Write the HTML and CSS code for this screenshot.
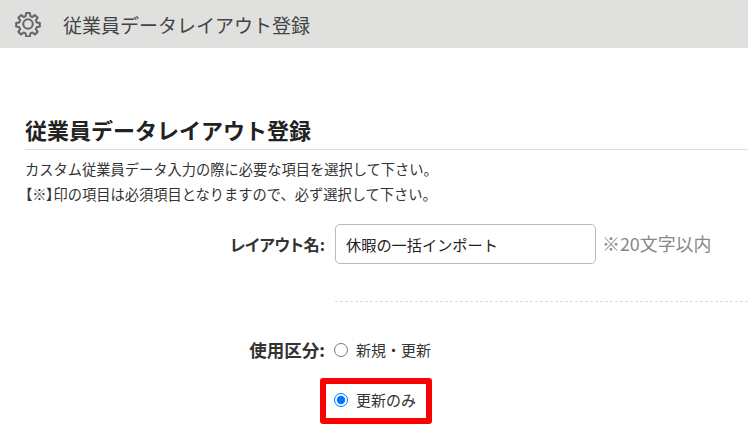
FILE: index.html
```html
<!DOCTYPE html>
<html lang="ja">
<head>
    <meta charset="UTF-8">
    <title>従業員データレイアウト登録</title>
    <link rel="stylesheet" href="styles.css">
</head>
<body>
    <div class="page-bar">
        <svg class="gear" viewBox="0 0 24 24" width="26" height="26" fill="none" stroke="#666" stroke-width="1.9" stroke-linejoin="round">
            <circle cx="12" cy="12" r="4.4"/>
            <path d="M10.3 1.8h3.4l.5 2.9 1.9.8 2.4-1.7 2.4 2.4-1.7 2.4.8 1.9 2.9.5v3.4l-2.9.5-.8 1.9 1.7 2.4-2.4 2.4-2.4-1.7-1.9.8-.5 2.9h-3.4l-.5-2.9-1.9-.8-2.4 1.7-2.4-2.4 1.7-2.4-.8-1.9-2.9-.5v-3.4l2.9-.5.8-1.9-1.7-2.4 2.4-2.4 2.4 1.7 1.9-.8z"/>
        </svg>
        <span class="page-title">従業員データレイアウト登録</span>
    </div>

    <div class="content">
        <h1>従業員データレイアウト登録</h1>
        <p class="lead">カスタム従業員データ入力の際に必要な項目を選択して下さい。</p>
        <p class="lead"><span class="mark">【※】</span>印の項目は必須項目となりますので、必ず選択して下さい。</p>

        <div class="form-row name-row">
            <label class="row-label" for="layout-name">レイアウト名:</label>
            <div class="row-value">
                <input type="text" id="layout-name" class="text-input" value="休暇の一括インポート">
                <span class="note">※20文字以内</span>
            </div>
        </div>

        <div class="divider"></div>

        <div class="form-row usage-row">
            <div class="row-label">使用区分:</div>
            <div class="row-value radio-list">
                <label class="radio"><input type="radio" name="usage"><span>新規・更新</span></label>
                <label class="radio selected"><input type="radio" name="usage" checked><span>更新のみ</span></label>
            </div>
        </div>
    </div>
</body>
</html>
```

FILE: styles.css
```css
body {
    margin: 0;
    min-height: 437px;
    font-family: "Noto Sans CJK JP", "Liberation Sans", sans-serif;
    color: #333;
    background: #fff;
    overflow: hidden;
}

.page-bar {
    height: 48px;
    background: #e0e0de;
    display: flex;
    align-items: center;
    padding-left: 15px;
}

.gear {
    margin-right: 22px;
}

.page-title {
    font-size: 19px;
    color: #444;
}

.content {
    padding: 64px 0 0 25px;
}

h1 {
    font-size: 22px;
    line-height: 34px;
    font-weight: bold;
    color: #222;
    margin: 0 0 6px;
    padding-bottom: 3px;
    border-bottom: 1px solid #ddd;
}

.lead {
    font-size: 14.25px;
    line-height: 25px;
    margin: 0;
    color: #333;
}

.mark {
    font-feature-settings: "palt";
}

.form-row {
    display: grid;
    grid-template-columns: 300px 1fr;
    column-gap: 10px;
}

.name-row {
    margin-top: 18px;
    align-items: center;
}

.row-label {
    text-align: right;
    font-size: 16.2px;
    font-weight: bold;
    font-feature-settings: "palt";
    color: #333;
}

.row-value {
    display: flex;
    align-items: center;
}

.text-input {
    width: 261px;
    height: 40px;
    box-sizing: border-box;
    border: 1px solid #bbb;
    border-radius: 5px;
    padding: 0 10px;
    font: inherit;
    font-size: 15.2px;
    color: #222;
}

.note {
    font-size: 17.9px;
    line-height: 24px;
    padding-bottom: 2px;
    color: #888;
    margin-left: 6px;
}

.divider {
    margin: 37px 0 0 310px;
    border-top: 1px dashed #ddd;
}

.usage-row {
    margin-top: 37px;
}

.usage-row .row-label {
    font-size: 17.5px;
    line-height: 22px;
}

.radio-list {
    flex-direction: column;
    align-items: flex-start;
    gap: 28px;
}

.radio {
    display: flex;
    align-items: center;
    font-size: 15px;
    line-height: 22px;
    position: relative;
}

.radio input {
    width: 14px;
    height: 14px;
    margin: 0 8px 0 -1px;
    accent-color: #0075ff;
}

/* red callout around the selected option */
.selected::before {
    content: "";
    position: absolute;
    left: -15px;
    right: -16px;
    top: -11px;
    bottom: -13px;
    border: 6px solid #f00;
    border-radius: 3px;
}
```
